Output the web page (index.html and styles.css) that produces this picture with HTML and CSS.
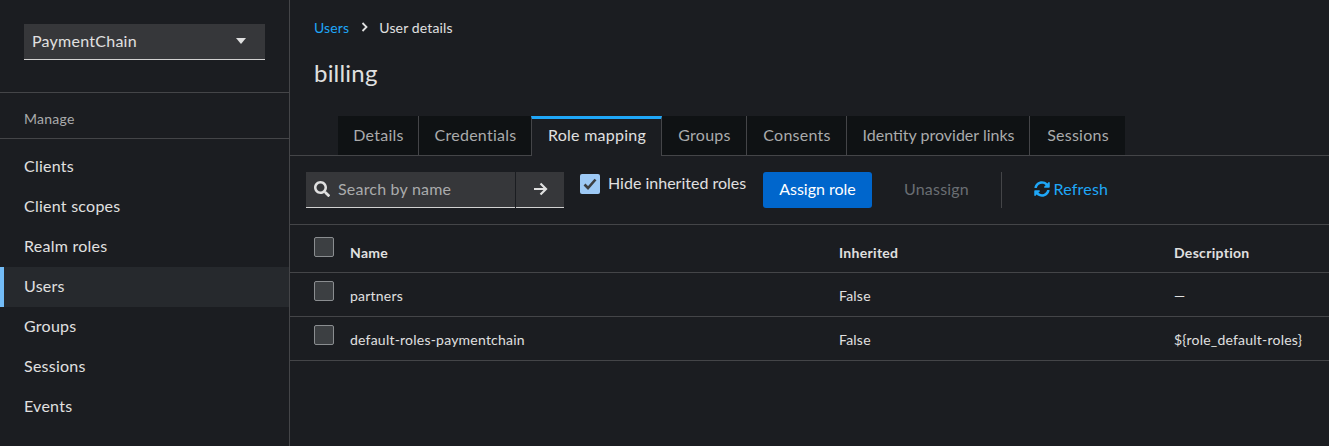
FILE: index.html
```html
<!DOCTYPE html>
<html lang="en">
<head>
    <meta charset="UTF-8">
    <title>User details</title>
    <link rel="stylesheet" href="styles.css">
</head>
<body>
    <div class="page">
        <aside class="sidebar">
            <div class="realm">
                <div class="realm-select">
                    <span>PaymentChain</span>
                    <i class="caret"></i>
                </div>
            </div>
            <div class="nav-title">Manage</div>
            <nav class="nav">
                <a href="#">Clients</a>
                <a href="#">Client scopes</a>
                <a href="#">Realm roles</a>
                <a href="#" class="active">Users</a>
                <a href="#">Groups</a>
                <a href="#">Sessions</a>
                <a href="#">Events</a>
            </nav>
        </aside>
        <main class="main">
            <div class="crumbs">
                <a href="#">Users</a>
                <svg class="crumb-sep" width="7" height="10" viewBox="0 0 7 10"><path d="M1.500 1l4 4-4 4" fill="none" stroke="#e0e0e0" stroke-width="1.800"/></svg>
                <span>User details</span>
            </div>
            <h1 class="title">billing</h1>
            <div class="tabs">
                <a href="#" class="tab">Details</a>
                <a href="#" class="tab before-current">Credentials</a>
                <a href="#" class="tab current">Role mapping</a>
                <a href="#" class="tab">Groups</a>
                <a href="#" class="tab">Consents</a>
                <a href="#" class="tab long">Identity provider links</a>
                <a href="#" class="tab">Sessions</a>
            </div>
            <div class="toolbar">
                <div class="search">
                    <svg class="search-icon" width="16" height="16" viewBox="0 0 512 512"><path fill="#e0e0e0" d="M505 442.700L405.300 343c-4.500-4.500-10.600-7-17-7H372c27.600-35.300 44-79.700 44-128C416 93.100 322.900 0 208 0S0 93.100 0 208s93.100 208 208 208c48.300 0 92.700-16.400 128-44v16.300c0 6.400 2.500 12.500 7 17l99.700 99.700c9.400 9.400 24.600 9.400 33.900 0l28.300-28.300c9.400-9.400 9.400-24.600.1-34zM208 336c-70.700 0-128-57.200-128-128 0-70.700 57.200-128 128-128 70.700 0 128 57.200 128 128 0 70.700-57.200 128-128 128z"/></svg>
                    <span>Search by name</span>
                </div>
                <div class="go">
                    <svg width="15" height="14" viewBox="0 0 15 14"><path d="M1 7h12M7.500 1.500l5.500 5.500-5.500 5.500" fill="none" stroke="#e0e0e0" stroke-width="2.200"/></svg>
                </div>
                <label class="hide-check">
                    <span class="tick">
                        <svg width="14" height="12" viewBox="0 0 14 12"><path d="M1.500 6.500l3.500 3.500 7.500-8.500" fill="none" stroke="#3c3f42" stroke-width="2.600"/></svg>
                    </span>
                    Hide inherited roles
                </label>
                <button class="btn-primary">Assign role</button>
                <button class="btn-off">Unassign</button>
                <div class="divider"></div>
                <a href="#" class="refresh">
                    <svg width="16" height="16" viewBox="0 0 512 512"><path fill="#1fa7f8" d="M370.720 133.280C339.458 104.008 298.888 87.962 255.848 88c-77.458.068-144.328 53.178-162.791 126.850-1.344 5.363-6.122 9.150-11.651 9.150H24.103c-7.498 0-13.194-6.807-11.807-14.176C33.933 94.924 134.813 8 256 8c66.448 0 126.791 26.136 171.315 68.685L463.030 40.970C478.149 25.851 504 36.559 504 57.941V192c0 13.255-10.745 24-24 24H345.941c-21.382 0-32.090-25.851-16.971-40.971l41.750-41.749zM32 296h134.059c21.382 0 32.090 25.851 16.971 40.971l-41.750 41.750c31.262 29.273 71.835 45.319 114.876 45.280 77.418-.070 144.315-53.144 162.787-126.849 1.344-5.363 6.122-9.150 11.651-9.150h57.304c7.498 0 13.194 6.807 11.807 14.176C478.067 417.076 377.187 504 256 504c-66.448 0-126.791-26.136-171.315-68.685L48.970 471.030C33.851 486.149 8 475.441 8 454.059V320c0-13.255 10.745-24 24-24z"/></svg>
                    Refresh
                </a>
            </div>
            <div class="roles">
                <div class="row head">
                    <span class="box"></span>
                    <span>Name</span>
                    <span>Inherited</span>
                    <span>Description</span>
                </div>
                <div class="row">
                    <span class="box"></span>
                    <span>partners</span>
                    <span>False</span>
                    <span>—</span>
                </div>
                <div class="row">
                    <span class="box"></span>
                    <span>default-roles-paymentchain</span>
                    <span>False</span>
                    <span>${role_default-roles}</span>
                </div>
            </div>
        </main>
    </div>
</body>
</html>
```

FILE: styles.css
```css
*{
    margin: 0;
    padding: 0;
    box-sizing: border-box;
}
html, body{
    height: 100%;
}
body{
    background-color: #1b1d21;
    color: #e0e0e0;
    font-family: "Lato", "Noto Sans", sans-serif;
    font-size: 16px;
    overflow: hidden;
}
a{
    color: inherit;
    text-decoration: none;
}
.page{
    display: flex;
    height: 446px;
}
.sidebar{
    width: 290px;
    flex: none;
    border-right: 1px solid #444548;
    letter-spacing: .25px;
}
.realm{
    height: 93px;
    padding: 24px 24px 0;
    border-bottom: 1px solid #444548;
}
.realm-select{
    width: 241px;
    height: 36px;
    padding: 0 19px 2px 8px;
    display: flex;
    align-items: center;
    justify-content: space-between;
    background-color: #36373a;
    border-bottom: 1px solid #d2d2d2;
}
.caret{
    width: 0;
    height: 0;
    border-left: 5px solid transparent;
    border-right: 5px solid transparent;
    border-top: 6px solid #e0e0e0;
}
.nav-title{
    height: 46px;
    padding-left: 24px;
    line-height: 52px;
    font-size: 14px;
    color: #aaabac;
    border-bottom: 1px solid #444548;
}
.nav{
    display: flex;
    flex-direction: column;
    padding-top: 8px;
}
.nav a{
    height: 40px;
    line-height: 38px;
    padding-left: 24px;
}
.nav a.active{
    background-color: #26292d;
    border-left: 4px solid #73bcf7;
    padding-left: 20px;
}
.main{
    flex: 1;
    min-width: 0;
}
.crumbs{
    display: flex;
    align-items: center;
    gap: 11.500px;
    height: 20px;
    margin: 17px 0 0 24px;
    font-size: 14px;
    letter-spacing: .15px;
}
.crumbs a{
    color: #1fa7f8;
}
.title{
    margin: 21px 0 0 24px;
    height: 30px;
    line-height: 29px;
    font-size: 24px;
    font-weight: 400;
    letter-spacing: .2px;
}
.tabs{
    display: grid;
    grid-template-columns: 81px 112px 131px 85px 100px 183px 95px;
    margin-top: 28px;
    padding-left: 48px;
    height: 40px;
    border-bottom: 1px solid #444548;
}
.tab{
    padding: 3px 0 0 1px;
    height: 39px;
    line-height: 31px;
    text-align: center;
    letter-spacing: .25px;
    color: #aaabac;
    background-color: #0f1214;
    border-right: 1px solid #444548;
}
.tab.long{
    letter-spacing: 0;
}
.tab.before-current, .tab:last-child{
    border-right: 0;
}
.tab.current{
    height: 40px;
    color: #e0e0e0;
    background-color: #1b1d21;
    border-top: 3px solid #1fa7f8;
    border-left: 1px solid #444548;
    padding-top: 0;
}
.toolbar{
    height: 69px;
    padding: 16px 0 0 16px;
    display: flex;
    align-items: flex-start;
    border-bottom: 1px solid #444548;
}
.search{
    width: 209px;
    height: 36px;
    padding: 0 0 2px 8px;
    display: flex;
    align-items: center;
    gap: 8px;
    letter-spacing: .2px;
    background-color: #36373a;
    border-bottom: 1px solid #d2d2d2;
    color: #aaabac;
}
.go{
    width: 48px;
    height: 36px;
    margin-left: 1px;
    padding-bottom: 2px;
    display: flex;
    align-items: center;
    justify-content: center;
    background-color: #36373a;
    border-bottom: 1px solid #d2d2d2;
}
.hide-check{
    display: flex;
    align-items: flex-start;
    gap: 8px;
    margin: 2px 0 0 16px;
    width: 167px;
    line-height: 18px;
    white-space: nowrap;
}
.tick{
    width: 20px;
    height: 20px;
    flex: none;
    display: flex;
    align-items: center;
    justify-content: center;
    border-radius: 2px;
    background-color: #9dc9f5;
}
.btn-primary{
    margin-left: 16px;
    width: 109px;
    height: 36px;
    padding-bottom: 3px;
    border: 0;
    border-radius: 3px;
    font: inherit;
    color: #fff;
    background-color: #06c;
}
.btn-off{
    margin-left: 16px;
    width: 97px;
    height: 36px;
    padding-bottom: 3px;
    border: 0;
    font: inherit;
    letter-spacing: .2px;
    color: #6a6e73;
    background: none;
}
.divider{
    width: 1px;
    height: 36px;
    margin-left: 16px;
    background-color: #444548;
}
.refresh{
    margin-left: 32px;
    height: 36px;
    padding-bottom: 3px;
    display: flex;
    align-items: center;
    gap: 3.500px;
    letter-spacing: .2px;
    color: #1fa7f8;
}
.row{
    display: grid;
    grid-template-columns: 36px 489px 335px 1fr;
    height: 44px;
    padding: 2px 0 0 24px;
    border-bottom: 1px solid #444548;
    align-items: center;
    font-size: 14px;
    letter-spacing: .22px;
}
.row.head{
    height: 48px;
    font-weight: 700;
    padding-top: 7px;
    letter-spacing: .3px;
}
.box{
    width: 20px;
    height: 20px;
    border: 1px solid #8a8d90;
    border-radius: 2px;
    background-color: #3c3f42;
    position: relative;
    top: -5px;
}
```
